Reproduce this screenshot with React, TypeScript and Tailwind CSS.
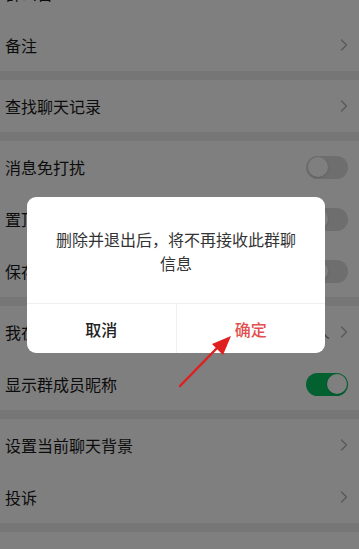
import React from 'react';

type RowProps = {
  label: string;
  right?: 'chevron' | 'off' | 'on';
  value?: string;
};

const Chevron = () => (
  <svg width="8" height="12" viewBox="0 0 8 12" fill="none">
    <path d="M1.5 1l5 5-5 5" stroke="#b2b2b2" strokeWidth="1.4" strokeLinecap="round" strokeLinejoin="round" />
  </svg>
);

const Toggle = ({ on }: { on: boolean }) => (
  <div
    className={`w-[42px] h-[23px] rounded-full p-[1.5px] flex ${
      on ? 'bg-[#07c160] justify-end' : 'bg-[#dcdcdc] justify-start'
    }`}
  >
    <div className="w-[20px] h-[20px] rounded-full bg-white shadow-sm" />
  </div>
);

const Row: React.FC<RowProps> = ({ label, right = 'chevron', value }) => (
  <div className="flex items-center justify-between h-[52px] pl-[5px] pr-[11px] bg-white">
    <span className="text-[16px] text-[#191919]">{label}</span>
    <div className="flex items-center gap-[10px]">
      {value && <span className="text-[15px] text-[#888]">{value}</span>}
      {right === 'chevron' && <Chevron />}
      {right === 'off' && <Toggle on={false} />}
      {right === 'on' && <Toggle on />}
    </div>
  </div>
);

const Gap = () => <div className="h-[9px] bg-[#ededed]" />;

export default function App() {
  return (
    <div
      className="relative w-[359px] h-[549px] overflow-hidden bg-white"
      style={{ fontFamily: '"Noto Sans CJK SC", "Noto Sans", sans-serif' }}
    >
      <div className="-mt-[33px]">
        <Row label="群公告" />
        <Row label="备注" />
        <Gap />
        <Row label="查找聊天记录" />
        <Gap />
        <Row label="消息免打扰" right="off" />
        <Row label="置顶聊天" right="off" />
        <Row label="保存到通讯录" right="off" />
        <Gap />
        <Row label="我在本群的昵称" value="小人" />
        <Row label="显示群成员昵称" right="on" />
        <Gap />
        <Row label="设置当前聊天背景" />
        <Row label="投诉" />
        <Gap />
        <div className="h-[52px] flex items-center justify-center bg-white">
          <span className="text-[16px] text-[#fa5151]">删除并退出</span>
        </div>
      </div>

      {/* mask */}
      <div className="absolute inset-0 bg-black/50" />

      {/* dialog */}
      <div className="absolute left-[27px] top-[197px] w-[298px] rounded-[9px] bg-white overflow-hidden">
        <div className="px-6 pt-[30px] pb-[28px] text-center text-[16px] leading-[24px] text-[#333]">
          删除并退出后，将不再接收此群聊信息
        </div>
        <div className="flex h-[50px] border-t border-[#f0f0f0]">
          <div className="flex-1 flex items-center justify-center text-[16px] font-medium text-[#222]">取消</div>
          <div className="flex-1 flex items-center justify-center text-[16px] font-medium text-[#e25050] border-l border-[#f0f0f0]">
            确定
          </div>
        </div>
      </div>

      {/* red arrow */}
      <svg className="absolute left-0 top-0" width="359" height="549" viewBox="0 0 359 549" fill="none">
        <line x1="180" y1="386" x2="219" y2="346" stroke="#e02020" strokeWidth="2.5" strokeLinecap="round" />
        <path d="M231 336 L212 344 L223 355 Z" fill="#e02020" />
      </svg>
    </div>
  );
}
